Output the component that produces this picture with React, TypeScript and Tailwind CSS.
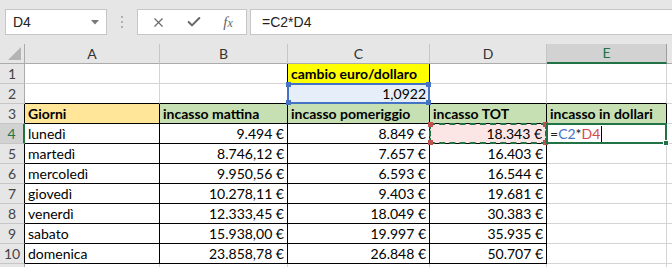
import { X, Check } from 'lucide-react';

const FONT = "font-['Lato','Liberation_Sans',sans-serif]";
const COLS = [135, 128, 142, 117, 120];
const LETTERS = ['A', 'B', 'C', 'D', 'E'];

type Cell = {
  t?: string;
  right?: boolean;
  bold?: boolean;
  bg?: string;
};

const rows: Cell[][] = [
  [{}, {}, { t: 'cambio euro/dollaro', bold: true, bg: 'bg-[#ffff00]' }, {}, {}],
  [{}, {}, { t: '1,0922', right: true, bg: 'bg-[#e6eef9]' }, {}, {}],
  [
    { t: 'Giorni', bold: true, bg: 'bg-[#ffe699]' },
    { t: 'incasso mattina', bold: true, bg: 'bg-[#c6e0b4]' },
    { t: 'incasso pomeriggio', bold: true, bg: 'bg-[#c6e0b4]' },
    { t: 'incasso TOT', bold: true, bg: 'bg-[#c6e0b4]' },
    { t: 'incasso in dollari', bold: true, bg: 'bg-[#c6e0b4]' },
  ],
  [{ t: 'lunedì' }, { t: '9.494 €', right: true }, { t: '8.849 €', right: true }, { t: '18.343 €', right: true, bg: 'bg-[#fbe5e5]' }, {}],
  [{ t: 'martedì' }, { t: '8.746,12 €', right: true }, { t: '7.657 €', right: true }, { t: '16.403 €', right: true }, {}],
  [{ t: 'mercoledì' }, { t: '9.950,56 €', right: true }, { t: '6.593 €', right: true }, { t: '16.544 €', right: true }, {}],
  [{ t: 'giovedì' }, { t: '10.278,11 €', right: true }, { t: '9.403 €', right: true }, { t: '19.681 €', right: true }, {}],
  [{ t: 'venerdì' }, { t: '12.333,45 €', right: true }, { t: '18.049 €', right: true }, { t: '30.383 €', right: true }, {}],
  [{ t: 'sabato' }, { t: '15.938,00 €', right: true }, { t: '19.997 €', right: true }, { t: '35.935 €', right: true }, {}],
  [{ t: 'domenica' }, { t: '23.858,78 €', right: true }, { t: '26.848 €', right: true }, { t: '50.707 €', right: true }, {}],
  [{}, {}, {}, {}, {}],
];

function blackRight(r: number, c: number) {
  if ((r === 1 || r === 2) && (c === 1 || c === 2)) return true;
  if (r >= 3 && r <= 10 && c <= 3) return true;
  if (r === 3 && c === 4) return true;
  return false;
}

function blackBottom(r: number, c: number) {
  if (r === 1 && c === 2) return true;
  if (r === 2) return true;
  if (r >= 3 && r <= 10 && c <= 3) return true;
  if (r === 3 && c === 4) return true;
  return false;
}

function Corner({ color, pos }: { color: string; pos: string }) {
  return <div className={`absolute w-[5px] h-[5px] ${color} ${pos}`} />;
}

function Toolbar() {
  return (
    <div className="h-[44px] bg-[#e6e6e6] flex items-start pt-[9px]">
      <div className="ml-[5px] w-[102px] h-[26px] bg-white border border-[#c6c6c6] flex items-center justify-between pl-[7px] pr-[7px]">
        <span className="text-[14px] text-[#222] font-['Liberation_Sans',sans-serif]">D4</span>
        <svg width="8" height="5" viewBox="0 0 8 5">
          <path d="M0 0 L8 0 L4 4.5 Z" fill="#777" />
        </svg>
      </div>
      <div className="w-[30px] h-[26px] flex flex-col items-center justify-center gap-[3px]">
        <div className="w-[2px] h-[2px] bg-[#b0b0b0]" />
        <div className="w-[2px] h-[2px] bg-[#b0b0b0]" />
        <div className="w-[2px] h-[2px] bg-[#b0b0b0]" />
      </div>
      <div className="w-[110px] h-[26px] bg-white border border-[#c6c6c6] flex items-center text-[#666]">
        <div className="w-[40px] flex justify-center">
          <X size={15} strokeWidth={1.8} />
        </div>
        <div className="w-[32px] flex justify-center">
          <Check size={16} strokeWidth={3} />
        </div>
        <div className="w-[36px] flex justify-center">
          <span className="font-['Liberation_Serif',serif] italic text-[15px] leading-none">
            f<span className="text-[12px]">x</span>
          </span>
        </div>
      </div>
      <div className="ml-[3px] flex-1 h-[26px] bg-white border-t border-b border-l border-[#c6c6c6] flex items-center pl-[11px]">
        <span className="text-[14px] text-[#222] font-['Liberation_Sans',sans-serif]">=C2*D4</span>
      </div>
    </div>
  );
}

function HeaderRow() {
  return (
    <div className="flex h-[20px] bg-[#e6e6e6]">
      <div className="w-[25px] h-full border-r border-b border-[#ababab] relative">
        <svg className="absolute right-[3px] bottom-[3px]" width="13" height="13" viewBox="0 0 13 13">
          <path d="M13 0 L13 13 L0 13 Z" fill="#b4b4b4" />
        </svg>
      </div>
      {COLS.map((w, i) => {
        const sel = i === 4;
        return (
          <div
            key={i}
            style={{ width: w }}
            className={`h-full flex items-center justify-center text-[14px] ${
              sel
                ? 'bg-[#d2d2d2] text-[#217346] border-b-2 border-b-[#217346] border-r border-r-[#9e9e9e]'
                : 'text-[#333] border-r border-r-[#c6c6c6] border-b border-b-[#ababab]'
            }`}
          >
            {LETTERS[i]}
          </div>
        );
      })}
      <div className="flex-1 h-full border-b border-[#ababab]" />
    </div>
  );
}

function Overlay({ r, c }: { r: number; c: number }) {
  if (r === 2 && c === 2) {
    return (
      <div className="absolute -left-[1px] -top-[1px] -right-[1px] -bottom-[1px] border-2 border-[#4472c4] z-10">
        <Corner color="bg-[#4472c4]" pos="-left-[3px] -top-[3px]" />
        <Corner color="bg-[#4472c4]" pos="-right-[3px] -top-[3px]" />
        <Corner color="bg-[#4472c4]" pos="-left-[3px] -bottom-[3px]" />
        <Corner color="bg-[#4472c4]" pos="-right-[3px] -bottom-[3px]" />
      </div>
    );
  }
  if (r === 4 && c === 3) {
    return (
      <div className="absolute -left-[1px] -top-[1px] -right-[1px] -bottom-[1px] border-2 border-dashed border-[#217346] z-10">
        <Corner color="bg-[#c0504d]" pos="-left-[3px] -top-[3px]" />
        <Corner color="bg-[#c0504d]" pos="-right-[3px] -top-[3px]" />
        <Corner color="bg-[#c0504d]" pos="-left-[3px] -bottom-[3px]" />
        <Corner color="bg-[#c0504d]" pos="-right-[3px] -bottom-[3px]" />
      </div>
    );
  }
  if (r === 4 && c === 4) {
    return (
      <div className="absolute -left-[1px] -top-[1px] -right-[1px] -bottom-[1px] border-2 border-[#217346] z-20 flex items-center pl-[2px]">
        <span className="text-[14px] leading-none">
          <span className="text-[#222]">=</span>
          <span className="text-[#4472c4]">C2</span>
          <span className="text-[#222]">*</span>
          <span className="text-[#d04a4a]">D4</span>
        </span>
        <div className="w-[1px] h-[16px] bg-black ml-[1px]" />
        <div className="absolute -right-[4px] -bottom-[4px] w-[6px] h-[6px] bg-[#217346] border border-white" />
      </div>
    );
  }
  return null;
}

function GridRow({ r, cells }: { r: number; cells: Cell[] }) {
  const active = r === 4;
  const blackLeft = r >= 3 && r <= 10;
  return (
    <div className="flex h-[20px]">
      <div
        className={`w-[25px] h-full flex items-center justify-center text-[14px] border-b border-b-[#c6c6c6] ${
          active
            ? 'bg-[#d2d2d2] text-[#217346] border-r-2 border-r-[#217346]'
            : `bg-[#e6e6e6] text-[#444] border-r ${blackLeft ? 'border-r-black' : 'border-r-[#ababab]'}`
        }`}
      >
        {r <= 10 ? r : ''}
      </div>
      {cells.map((cell, c) => {
        const br = blackRight(r, c) ? 'border-r-black' : 'border-r-[#d4d4d4]';
        const bb = blackBottom(r, c) ? 'border-b-black' : 'border-b-[#d4d4d4]';
        const hasOverlay = (r === 2 && c === 2) || (r === 4 && (c === 3 || c === 4));
        return (
          <div
            key={c}
            style={{ width: COLS[c] }}
            className={`h-full border-r border-b ${br} ${bb} ${cell.bg ?? 'bg-white'} ${
              hasOverlay ? 'relative' : ''
            } flex items-center px-[3px] whitespace-nowrap text-[14px] text-black ${
              cell.right ? 'justify-end' : 'justify-start'
            } ${cell.bold ? 'font-bold' : ''}`}
          >
            {cell.t && <span className={r === 4 && c === 3 ? 'pr-[1px]' : ''}>{cell.t}</span>}
            <Overlay r={r} c={c} />
          </div>
        );
      })}
      <div className="flex-1 h-full border-b border-[#d4d4d4] bg-white" />
    </div>
  );
}

export default function App() {
  return (
    <div className={`w-[672px] h-[267px] overflow-hidden bg-white ${FONT} leading-none`}>
      <Toolbar />
      <HeaderRow />
      {rows.map((cells, i) => (
        <GridRow key={i} r={i + 1} cells={cells} />
      ))}
    </div>
  );
}
